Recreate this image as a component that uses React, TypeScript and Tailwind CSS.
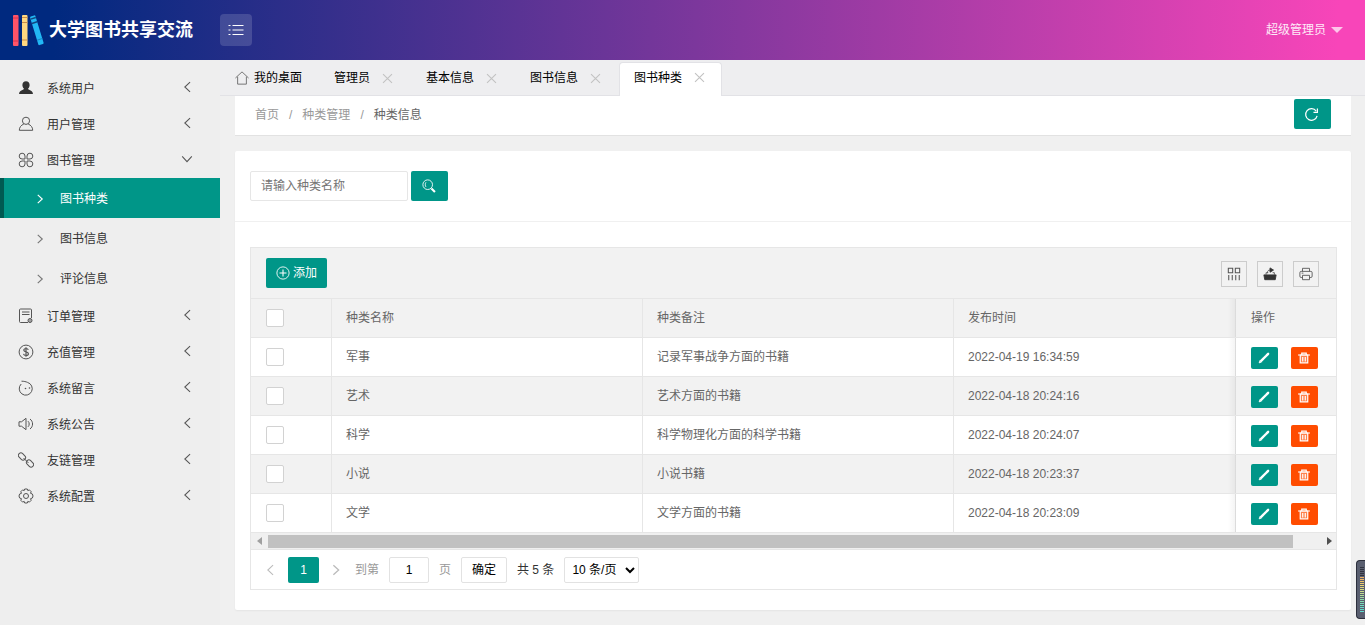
import { useState } from 'react'
import type { ReactNode } from 'react'

// Types
type MenuEntry = { label: string, icon: ReactNode, children?: string[] }
type Category = { name: string, remark: string, time: string }

// Icons
const Icon = ({ className = 'size-4', children }: { className?: string, children: ReactNode }) => (
  <svg viewBox="0 0 16 16" className={`${ className } shrink-0`} fill="none" stroke="currentColor" strokeWidth="1" aria-hidden="true">
    {children}
  </svg>
)

const UserSolidIcon = () => (
  <Icon>
    <path d="M8 1.2c2.200 0 3.600 1.600 3.600 3.800 0 1.500-.6 2.900-1.500 3.600 0 .6.300.8 1 1.100 2.200.8 3.600 1.600 3.900 4.300H1c.3-2.700 1.700-3.500 3.900-4.300.7-.3 1-.5 1-1.100C5 7.900 4.400 6.500 4.400 5 4.400 2.800 5.800 1.200 8 1.200z" fill="#333" stroke="none" />
  </Icon>
)

const UserIcon = () => (
  <Icon>
    <circle cx="8" cy="4.800" r="3.600" />
    <path d="M5.800 8C3 9.300 1.300 11.300 1.300 14.300h13.400c0-3-1.700-5-4.500-6.300" />
  </Icon>
)

const CloverIcon = () => (
  <Icon>
    <path d="M7 7H4a2.900 2.900 0 1 1 3-3zM9 7V4a2.900 2.900 0 1 1 3 3zM7 9v3a2.900 2.900 0 1 1-3-3zM9 9h3a2.900 2.900 0 1 1-3 3z" />
  </Icon>
)

const OrderIcon = () => (
  <Icon>
    <path d="M10 14.500H2.500a1 1 0 0 1-1-1V2a1 1 0 0 1 1-1h10a1 1 0 0 1 1 1v8" />
    <path d="M4 4h7.500M4 6.500h7.500" />
    <circle cx="12" cy="12.500" r="2" fill="currentColor" fillOpacity=".5" />
  </Icon>
)

const DollarIcon = () => (
  <Icon>
    <circle cx="8" cy="8" r="6.900" />
    <path d="M10.300 5.900C10 4.900 9.100 4.500 8 4.500S5.800 5 5.800 6.200c0 2.300 4.600 1.100 4.600 3.500 0 1.200-1.100 1.800-2.400 1.800s-2.200-.6-2.500-1.600M8 3.300v9.400" strokeWidth="1.200" />
  </Icon>
)

const MessageIcon = () => (
  <Icon>
    <path d="M3.500 1.200c2.400 0 4.500.5 6 1.200A6.500 6.500 0 1 1 3.200 4" />
    <circle cx="7.500" cy="8.500" r=".8" fill="currentColor" stroke="none" />
    <circle cx="11.500" cy="8" r=".8" fill="currentColor" stroke="none" />
  </Icon>
)

const SpeakerIcon = () => (
  <Icon>
    <path d="M1 5.800h2.500L8 2.300v11.400l-4.500-3.500H1z" />
    <path d="M10 5.200c1.600 1.300 1.600 4.300 0 5.600M12 3c3.400 2.500 3.400 7.500 0 10" />
  </Icon>
)

const LinkIcon = () => (
  <Icon>
    <rect x="0" y="2" width="8" height="5" rx="2.500" transform="rotate(45 4 4.500)" />
    <rect x="8" y="9" width="8" height="5" rx="2.500" transform="rotate(45 12 11.500)" />
    <path d="m5.500 6 5 5" />
  </Icon>
)

const GearIcon = () => (
  <Icon>
    <path d="M6.700 1h2.600l.5 1.600 1.600-.7 1.800 1.800-.7 1.600 1.900.7.600 2-.6 2-1.900.7.700 1.600-1.800 1.800-1.600-.7-.5 1.600H6.700l-.5-1.600-1.600.7-1.800-1.800.7-1.600-1.900-.7-.6-2 .6-2 1.900-.7-.7-1.600 1.800-1.800 1.600.7z" strokeLinejoin="round" />
    <circle cx="8" cy="8" r="2.500" />
  </Icon>
)

const ChevronIcon = ({ dir, className }: { dir: 'left' | 'right' | 'down', className?: string }) => (
  <Icon className={className}>
    {dir === 'left' && <path d="m11.500 2.500-6 5.500 6 5.500" strokeWidth="1.200" />}
    {dir === 'right' && <path d="m5 2.500 6 5.500-6 5.500" strokeWidth="1.500" />}
    {dir === 'down' && <path d="m2.500 5 5.500 6 5.500-6" strokeWidth="1.200" />}
  </Icon>
)

const Logo = () => (
  <svg viewBox="0 0 32 34" className="h-[34px] w-8" aria-hidden="true">
    <rect x="1" y="2" width="5.500" height="31" rx="1" fill="#ff5468" />
    <path d="M1 5h5.500M1 28h5.500" stroke="#d8304c" />
    <rect x="10" y="2" width="5.500" height="31" rx="1" fill="#ffd880" />
    <path d="M10 4.500h5.500M10 9.500h5.500M10 27h5.500" stroke="#c98d4a" />
    <g transform="rotate(-17 24 17)">
      <rect x="22" y="2.500" width="5.500" height="30" rx="1" fill="#22b8f5" />
      <path d="M22 5h5.500M22 9.500h5.500" stroke="#13457e" strokeWidth="1.500" />
      <path d="M22 27h5.500" stroke="#1b86c9" />
    </g>
  </svg>
)

// Data
const menu: MenuEntry[] = [
  { label: '系统用户', icon: <UserSolidIcon /> },
  { label: '用户管理', icon: <UserIcon /> },
  { label: '图书管理', icon: <CloverIcon />, children: ['图书种类', '图书信息', '评论信息'] },
  { label: '订单管理', icon: <OrderIcon /> },
  { label: '充值管理', icon: <DollarIcon /> },
  { label: '系统留言', icon: <MessageIcon /> },
  { label: '系统公告', icon: <SpeakerIcon /> },
  { label: '友链管理', icon: <LinkIcon /> },
  { label: '系统配置', icon: <GearIcon /> },
]

const tabs = ['管理员', '基本信息', '图书信息', '图书种类']

const categories: Category[] = [
  { name: '军事', remark: '记录军事战争方面的书籍', time: '2022-04-19 16:34:59' },
  { name: '艺术', remark: '艺术方面的书籍', time: '2022-04-18 20:24:16' },
  { name: '科学', remark: '科学物理化方面的科学书籍', time: '2022-04-18 20:24:07' },
  { name: '小说', remark: '小说书籍', time: '2022-04-18 20:23:37' },
  { name: '文学', remark: '文学方面的书籍', time: '2022-04-18 20:23:09' },
]

const meterBars = [
  'bg-[#30333f]', 'bg-[#30333f]', 'bg-[#30333f]', 'bg-[#30333f]', 'bg-[#30333f]',
  'bg-[#f0b060]', 'bg-[#f0b868]', 'bg-[#eec468]', 'bg-[#eccc70]', 'bg-[#e6d478]', 'bg-[#e0d880]',
  'bg-[#d8dc80]', 'bg-[#ccdc88]', 'bg-[#c0dc90]', 'bg-[#b0dc98]', 'bg-[#a0dca0]', 'bg-[#90dca8]',
  'bg-[#80dcb0]', 'bg-[#78dcb8]', 'bg-[#70dcc0]', 'bg-[#68dcc8]', 'bg-[#60dcc8]', 'bg-[#60dcd0]',
]

const Header = () => ( // Top bar
  <header className="flex h-[60px] items-center bg-linear-[92deg,#00297f_4%,#f845b9_98%] text-white">
    <div className="flex w-[220px] items-center gap-[5px] pl-3">
      <Logo />
      <h1 className="text-lg font-bold">大学图书共享交流</h1>
    </div>
    <button type="button" aria-label="菜单" className="flex size-8 items-center justify-center rounded-sm bg-white/15">
      <Icon>
        <path d="M4.500 3.500h11M4.500 8h11M4.500 12.500h11M.5 3.500h2M.5 8h2M.5 12.500h2" />
      </Icon>
    </button>
    <button type="button" className="mr-[22px] ml-auto flex items-center gap-[5px] text-white/90">
      超级管理员
      <span className="border-x-[6px] border-t-[6px] border-x-transparent border-t-white/70" />
    </button>
  </header>
)

const SideMenu = () => ( // Left navigation
  <nav className="w-[220px] shrink-0 bg-[#eee] pt-[10px] text-[#333]">
    <ul>
      {menu.map(({ label, icon, children }) => (
        <li key={label}>
          <a href="#" className="flex h-9 items-center pr-[25px] pl-[18px]">
            <span className="text-[#555]">{icon}</span>
            <span className="ml-[13px] flex-1 pt-[2px]">{label}</span>
            <ChevronIcon dir={children ? 'down' : 'left'} className="size-4 pb-[2px] text-[#555]" />
          </a>
          {children && (
            <ul>
              {children.map((child, index) => (
                <li key={child}>
                  <a
                    href="#"
                    className={index === 0
                      ? 'flex h-10 items-center gap-[14px] border-l-4 border-[#005a52] bg-[#009688] pt-[2px] pl-[30px] text-white'
                      : 'flex h-10 items-center gap-[14px] pt-[2px] pl-[34px]'}>
                      <ChevronIcon dir="right" className={index === 0 ? 'size-3' : 'size-3 text-[#777]'} />
                      {child}
                  </a>
                </li>
              ))}
            </ul>
          )}
        </li>
      ))}
    </ul>
  </nav>
)

const TabBar = () => ( // Open pages
  <div className="flex h-9 items-end border-b border-[#e2e2e6] bg-[#eeeef0] text-black">
    <a href="#" className="mr-px flex h-[34px] items-center gap-[5px] pr-4 pl-[15px]">
      <Icon className="size-[14px] text-[#666]">
        <path d="M.5 8 8 1l7.500 7M3 6.500V15h10V6.500" />
      </Icon>
      我的桌面
    </a>
    {tabs.map((tab) => (
      <div
        key={tab}
        className={tab === '图书种类'
          ? '-mb-px flex h-[34px] items-center gap-3 rounded-t-sm border border-b-0 border-[#e2e2e6] bg-white pr-4 pb-1 pl-[14px]'
          : 'mr-px flex h-[34px] items-center gap-3 border-x border-transparent pr-4 pl-[14px]'}>
          <a href="#">{tab}</a>
          <button type="button" aria-label={`关闭${ tab }`} className="text-[#c2c2c2]">
            <Icon className="size-[11px]">
              <path d="m1.500 1.500 13 13M14.500 1.500l-13 13" strokeWidth="1.600" />
            </Icon>
          </button>
      </div>
    ))}
  </div>
)

const Breadcrumb = () => ( // Page path and refresh
  <div className="mr-[14px] ml-[15px] flex h-10 items-center justify-between border-b border-[#e2e2e2] bg-white pr-5 pb-[3px] pl-5">
    <nav className="flex gap-[10px] pt-[2px] text-[#999]">
      <a href="#">首页</a>
      <span>/</span>
      <a href="#">种类管理</a>
      <span>/</span>
      <a href="#" className="text-[#666]">种类信息</a>
    </nav>
    <button type="button" aria-label="刷新" className="flex h-[30px] w-[37px] items-center justify-center rounded-xs bg-[#009688] pr-[2px] text-white">
      <Icon className="size-[15px]">
        <path d="M14 9.500A6.200 6.200 0 1 1 13 4.300" strokeWidth="1.300" />
        <path d="M14.300 1.500v4.200h-4.200" strokeWidth="1.300" />
      </Icon>
    </button>
  </div>
)

const SearchForm = () => ( // Filter by category name
  <form className="flex gap-[3px] border-b border-[#f0f0f0] px-[15px] py-5" onSubmit={(e) => e.preventDefault()}>
    <input
      type="text"
      aria-label="种类名称"
      placeholder="请输入种类名称"
      className="h-[30px] w-[158px] rounded-xs border border-[#e6e6e6] px-[10px] placeholder:text-[#757575]" />
    <button type="submit" aria-label="搜索" className="flex h-[30px] w-[37px] items-center justify-center rounded-xs bg-[#009688] pr-[2px] text-white">
      <Icon className="size-[14px]">
        <circle cx="6.500" cy="6.500" r="5.500" />
        <path d="M4.500 3.800c-1 1.300-1 3.800 0 5.200" />
        <path d="m10.800 10.800 4 4" strokeWidth="2.400" />
      </Icon>
    </button>
  </form>
)

const ToolButton = ({ label, children }: { label: string, children: ReactNode }) => ( // Table toolbar button
  <button type="button" aria-label={label} className="flex size-[26px] items-center justify-center border border-[#ccc] text-[#555]">
    <Icon className="size-[14px]">{children}</Icon>
  </button>
)

const Toolbar = () => (
  <div className="flex h-[51px] items-center justify-between border-b border-[#e6e6e6] bg-[#f2f2f2] pr-[17px] pl-[15px]">
    <button type="button" className="flex h-[30px] items-center gap-[3px] rounded-xs bg-[#009688] px-[10px] text-white">
      <Icon className="size-[14px]">
        <circle cx="8" cy="8" r="7" />
        <path d="M8 4v8M4 8h8" strokeWidth="1.200" />
      </Icon>
      添加
    </button>
    <div className="flex gap-[10px] pt-[2px]">
      <ToolButton label="筛选列">
        <path d="M1.500 1.500h5v5h-5zM9.500 1.500h5v5h-5zM2 9v6M6 9v6M10 9v6M14 9v6" strokeWidth="1.200" />
      </ToolButton>
      <ToolButton label="导出">
        <path d="M1 9h14l-1 5.500H2z" fill="#333" stroke="#333" />
        <path d="M3.500 9V6.500H6M11 6.500h2V9M5 7c0-2.500 1-3.500 3-3.500" />
        <path d="M8 1v5l4-2.500z" fill="#333" stroke="#333" />
      </ToolButton>
      <ToolButton label="打印">
        <path d="M4 5V1.500h8V5M4 12H2.500a1.500 1.500 0 0 1-1.500-1.500v-4A1.500 1.500 0 0 1 2.500 5h11A1.500 1.500 0 0 1 15 6.500v4a1.500 1.500 0 0 1-1.500 1.500H12M4 9.500h8v5H4zM3 7h2" />
      </ToolButton>
    </div>
  </div>
)

const Checkbox = ({ label }: { label: string }) => (
  <input
    type="checkbox"
    aria-label={label}
    className="block size-[18px] appearance-none rounded-xs border border-[#d2d2d2] bg-white checked:bg-[#009688]" />
)

const checkCell = 'h-[39px] border-r border-b border-[#e6e6e6] px-[15px] text-left font-normal'
const cell = 'h-[39px] border-r border-b border-[#e6e6e6] px-[14px] text-left font-normal'
const lastCell = 'h-[39px] border-b border-[#e6e6e6] px-[14px] text-left font-normal'
const fixedCell = 'relative h-[39px] border-b border-l border-[#e6e6e6] px-[15px] text-left font-normal before:absolute before:inset-y-0 before:right-full before:w-2 before:bg-linear-to-l before:from-black/5 before:to-transparent'

const CategoryTable = () => ( // Category rows
  <table className="w-full table-fixed border-separate border-spacing-0">
    <colgroup>
      <col className="w-[81px]" />
      <col className="w-[311px]" />
      <col className="w-[311px]" />
      <col />
      <col className="w-[101px]" />
    </colgroup>
    <thead className="bg-[#f2f2f2]">
      <tr>
        <th className={checkCell}><Checkbox label="全选" /></th>
        <th className={cell}>种类名称</th>
        <th className={cell}>种类备注</th>
        <th className={lastCell}>发布时间</th>
        <th className={fixedCell}>操作</th>
      </tr>
    </thead>
    <tbody>
      {categories.map(({ name, remark, time }) => (
        <tr key={name} className="even:bg-[#f2f2f2]">
          <td className={checkCell}><Checkbox label={name} /></td>
          <td className={cell}>{name}</td>
          <td className={cell}>{remark}</td>
          <td className={lastCell}>{time}</td>
          <td className={fixedCell}>
            <div className="flex gap-[13px] pt-px">
              <button type="button" aria-label="编辑" className="flex h-[22px] w-[27px] items-center justify-center rounded-xs bg-[#009688] pr-[2px] text-white">
                <Icon className="size-3">
                  <path d="M3.500 12.500 11 5" strokeWidth="3.200" />
                  <path d="m11.500 4.500 2-2" strokeWidth="3.200" strokeLinecap="round" />
                  <path d="m1.500 14.500 1-3 2 2z" fill="currentColor" />
                </Icon>
              </button>
              <button type="button" aria-label="删除" className="flex h-[22px] w-[27px] items-center justify-center rounded-xs bg-[#ff4c00] pr-[2px] text-white">
                <Icon className="size-3">
                  <path d="M3 4h10v10.500H3z" fill="currentColor" fillOpacity=".3" strokeWidth="1.600" />
                  <path d="M0 4h16M5 4V1.500h6V4M6.300 6.500v6M9.700 6.500v6" strokeWidth="1.600" />
                </Icon>
              </button>
            </div>
          </td>
        </tr>
      ))}
    </tbody>
  </table>
)

const ScrollTrack = () => ( // Horizontal scroll bar under the table
  <div className="flex h-4 items-center bg-[#f0f0f0] pr-1 pl-[6px]">
    <span className="border-y-4 border-r-[5px] border-y-transparent border-r-[#a0a0a0]" />
    <div className="mr-[34px] ml-[6px] h-[13px] flex-1 bg-[#c1c1c1]" />
    <span className="border-y-4 border-l-[5px] border-y-transparent border-l-[#505050]" />
  </div>
)

const Pager = () => { // Page navigation
  const [page, setPage] = useState('1')

  return (
    <div className="flex h-10 items-center gap-[10px] border-t border-[#e6e6e6] px-3 text-[#333]">
      <button type="button" aria-label="上一页" className="mr-px text-[#bbb]"><ChevronIcon dir="left" className="size-[14px]" /></button>
      <button type="button" className="h-[26px] w-[31px] rounded-xs bg-[#009688] text-white">1</button>
      <button type="button" aria-label="下一页" className="mr-[2px] text-[#bbb]"><ChevronIcon dir="right" className="size-[14px]" /></button>
      <label htmlFor="page" className="text-[#999]">到第</label>
      <input
        id="page"
        type="text"
        value={page}
        onChange={(e) => setPage(e.target.value)}
        className="h-[26px] w-10 rounded-xs border border-[#e2e2e2] text-center text-black" />
      <span className="text-[#999]">页</span>
      <button type="button" className="h-[26px] w-[46px] rounded-xs border border-[#e2e2e2] text-black">确定</button>
      <span>共 5 条</span>
      <select aria-label="每页条数" className="h-[26px] w-[75px] rounded-xs border border-[#e2e2e2] bg-white pl-[3px] text-black">
        <option>10 条/页</option>
        <option>20 条/页</option>
        <option>30 条/页</option>
      </select>
    </div>
  )
}

const Meter = () => ( // Floating gauge on the window edge
  <div className="fixed right-0 bottom-[6px] flex h-[59px] w-[9px] flex-col gap-px rounded-l-sm border border-r-0 border-[#2c2f3c] bg-[#5a5f70] pt-[6px] pl-[3px]">
    {meterBars.map((color, index) => (
      <span key={index} className={`${ color } h-px w-1 shrink-0`} />
    ))}
  </div>
)

export default function App() {
  return (
    <div className="flex min-h-screen flex-col bg-[#f0f0f0] font-['Liberation_Sans','Noto_Sans_CJK_SC',sans-serif] text-xs text-[#666]">
      <Header />
      <div className="flex flex-1">
        <SideMenu />
        <main className="min-w-0 flex-1">
          <TabBar />
          <Breadcrumb />
          <section className="my-[15px] mr-[14px] ml-[15px] rounded-xs bg-white pb-5 shadow-xs">
            <SearchForm />
            <div className="mt-[25px] mr-[14px] ml-[15px] border border-[#e6e6e6]">
              <Toolbar />
              <CategoryTable />
              <ScrollTrack />
              <Pager />
            </div>
          </section>
        </main>
      </div>
      <Meter />
    </div>
  )
}
